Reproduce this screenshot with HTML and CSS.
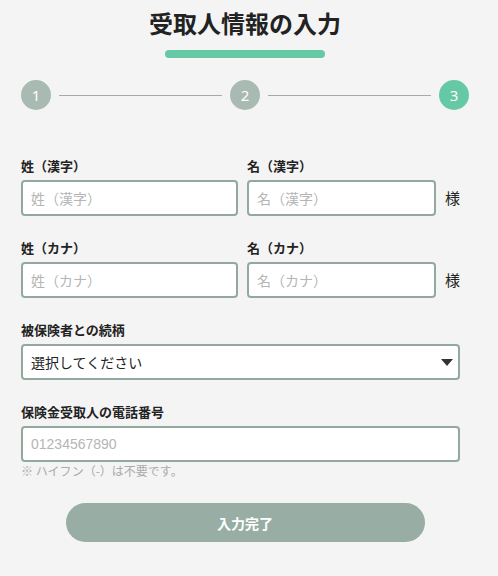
FILE: index.html
```html
<!DOCTYPE html>
<html lang="ja">
<head>
<meta charset="utf-8">
<title>受取人情報の入力</title>
<link rel="stylesheet" href="styles.css">
</head>
<body>
<main class="page">
  <header class="head">
    <h1 class="title">受取人情報の入力</h1>
    <div class="title-bar"></div>
  </header>

  <ol class="steps">
    <li class="step">1</li>
    <li class="step-line"></li>
    <li class="step">2</li>
    <li class="step-line"></li>
    <li class="step step-active">3</li>
  </ol>

  <form class="form">
    <div class="name-row">
      <div class="field field-wide">
        <label class="label">姓（漢字）</label>
        <input class="input" type="text" placeholder="姓（漢字）">
      </div>
      <div class="field field-narrow">
        <label class="label">名（漢字）</label>
        <input class="input" type="text" placeholder="名（漢字）">
      </div>
      <span class="suffix">様</span>
    </div>

    <div class="name-row">
      <div class="field field-wide">
        <label class="label">姓（カナ）</label>
        <input class="input" type="text" placeholder="姓（カナ）">
      </div>
      <div class="field field-narrow">
        <label class="label">名（カナ）</label>
        <input class="input" type="text" placeholder="名（カナ）">
      </div>
      <span class="suffix">様</span>
    </div>

    <div class="field field-full">
      <label class="label">被保険者との続柄</label>
      <div class="select-wrap">
        <select class="select">
          <option>選択してください</option>
        </select>
        <svg class="select-arrow" width="12" height="7" viewBox="0 0 12 7"><path d="M0 0 H12 L6 7 Z" fill="#333"/></svg>
      </div>
    </div>

    <div class="field field-full field-last">
      <label class="label">保険金受取人の電話番号</label>
      <input class="input input-tel" type="tel" placeholder="01234567890">
      <p class="hint">※ ハイフン（-）は不要です。</p>
    </div>

    <div class="actions">
      <button class="submit" type="button">入力完了</button>
    </div>
  </form>
</main>
</body>
</html>
```

FILE: styles.css
```css
* { box-sizing: border-box; }

html, body {
  margin: 0;
  padding: 0;
  background: #f4f4f4;
}

body {
  font-family: "Noto Sans CJK JP", "Noto Sans", sans-serif;
  color: #222;
}

.page {
  width: 448px;
  margin-left: 21px;
  padding-top: 6px;
}

.head {
  display: flex;
  flex-direction: column;
  align-items: center;
}

.title {
  margin: 0;
  font-size: 24px;
  line-height: 34px;
  font-weight: 700;
  color: #222;
}

.title-bar {
  width: 160px;
  height: 8px;
  border-radius: 4px;
  background: #66c9a6;
  margin-top: 10px;
}

.steps {
  list-style: none;
  margin: 22px 0 0;
  padding: 0;
  display: flex;
  align-items: center;
  gap: 8px;
}

.step {
  width: 30px;
  height: 30px;
  border-radius: 50%;
  background: #a9bab3;
  color: #fff;
  font-family: "Noto Sans", sans-serif;
  font-size: 15px;
  display: flex;
  align-items: center;
  justify-content: center;
  flex: none;
}

.step-active {
  background: #66c9a6;
}

.step-line {
  flex: 1;
  height: 1px;
  background: #a8a8a8;
}

.form {
  width: 439px;
  margin-top: 46px;
}

.name-row {
  display: flex;
  align-items: flex-end;
  gap: 9px;
  margin-bottom: 22px;
}

.field {
  display: flex;
  flex-direction: column;
}

.field-wide { width: 217px; }
.field-narrow { width: 189px; }
.field-full { width: 439px; margin-bottom: 22px; }
.field-last { margin-bottom: 0; }

.label {
  font-size: 13px;
  line-height: 20px;
  font-weight: 700;
  color: #222;
  margin-bottom: 4px;
}

.input,
.select {
  width: 100%;
  height: 36px;
  border: 2px solid #93a99f;
  border-radius: 4px;
  background: #fff;
  padding: 0 8px;
  font-family: "Noto Sans CJK JP", sans-serif;
  font-size: 14px;
  color: #333;
  outline: none;
}

.input::placeholder {
  color: #b5b5b5;
}

.input-tel {
  font-family: "Liberation Sans", "Noto Sans CJK JP", sans-serif;
  font-size: 14px;
}

.suffix {
  font-size: 15px;
  line-height: 36px;
  color: #222;
}

.select-wrap {
  position: relative;
}

.select {
  appearance: none;
  -webkit-appearance: none;
  color: #222;
  font-size: 14px;
}

.select-arrow {
  position: absolute;
  right: 7px;
  top: 15px;
  pointer-events: none;
}

.hint {
  margin: 1px 0 0;
  font-size: 12px;
  line-height: 16px;
  color: #aaa;
}

.actions {
  display: flex;
  justify-content: center;
  margin-top: 24px;
  width: 448px;
}

.submit {
  width: 359px;
  height: 39px;
  border: none;
  border-radius: 20px;
  background: #98aea5;
  color: #fff;
  font-family: "Noto Sans CJK JP", sans-serif;
  font-size: 14px;
  font-weight: 700;
}
```
